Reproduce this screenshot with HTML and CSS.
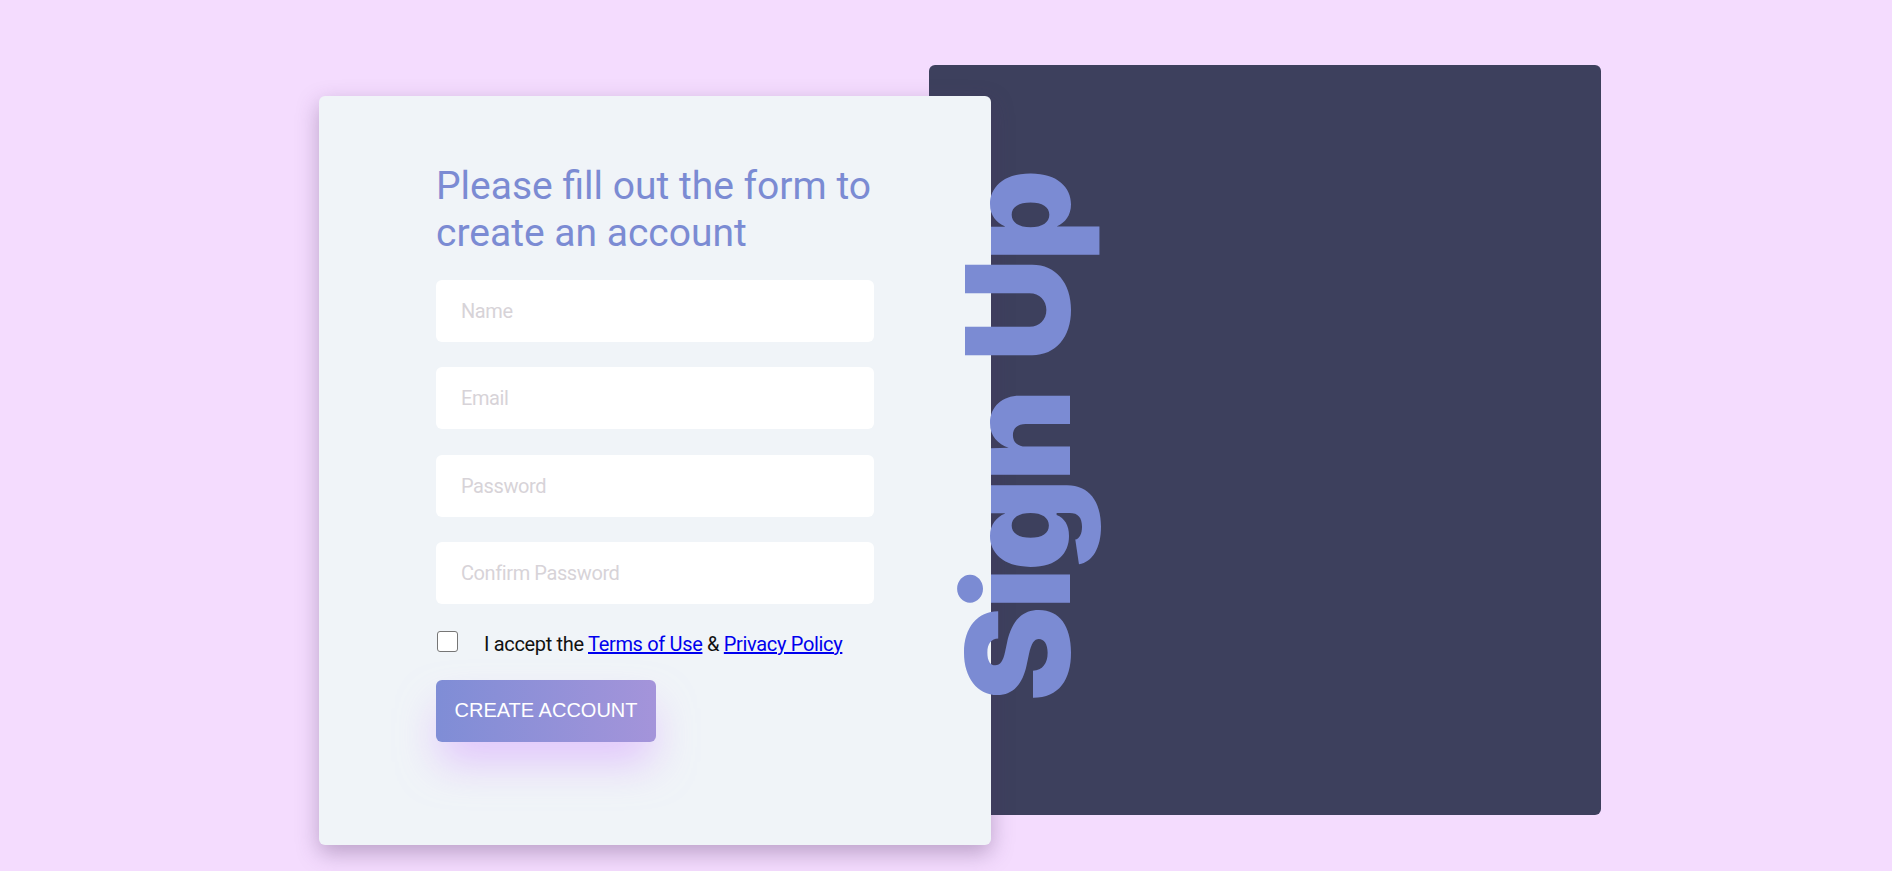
FILE: index.html
```html
<!DOCTYPE html>
<html lang="en">
<head>
<meta charset="utf-8">
<title>Sign Up</title>
<link rel="stylesheet" href="styles.css">
</head>
<body>
<main class="stage">
  <section class="card">
    <form class="form">
      <h2 class="title">Please fill out the form to create an account</h2>
      <input class="field" type="text" placeholder="Name">
      <input class="field" type="email" placeholder="Email">
      <input class="field" type="password" placeholder="Password">
      <input class="field" type="password" placeholder="Confirm Password">
      <label class="terms">
        <input class="check" type="checkbox">
        <span class="terms-text">I accept the <a href="#">Terms of Use</a> &amp; <a href="#">Privacy Policy</a></span>
      </label>
      <button class="btn" type="button">CREATE ACCOUNT</button>
    </form>
  </section>
  <aside class="panel">
    <h1 class="signup">Sign Up</h1>
  </aside>
</main>
</body>
</html>
```

FILE: styles.css
```css
html, body {
  margin: 0;
  padding: 0;
}

body {
  background: #f4dcfe;
  font-family: Roboto, "Liberation Sans", sans-serif;
  min-height: 100vh;
  overflow: hidden;
}

.stage {
  display: flex;
  align-items: flex-start;
  padding: 65px 0 0 319px;
}

.card {
  position: relative;
  z-index: 1;
  flex: none;
  box-sizing: border-box;
  width: 672px;
  height: 749px;
  margin-top: 31px;
  margin-right: -62px;
  padding: 67.3px 0 0 117px;
  background: #f0f4f8;
  border-radius: 6px;
  box-shadow: 0 8px 22px rgba(80, 50, 100, 0.35);
}

.form {
  width: 438px;
  display: flex;
  flex-direction: column;
}

.title {
  margin: 0 -40px 23.3px 0;
  font-family: Roboto, sans-serif;
  font-size: 39px;
  font-weight: 400;
  line-height: 46.7px;
  letter-spacing: 0;
  color: #7b8bd3;
}

.field {
  box-sizing: border-box;
  height: 62px;
  margin: 0 0 25.33px;
  padding: 0 25px;
  border: 0;
  border-radius: 6px;
  background: #fff;
  font-family: Roboto, sans-serif;
  font-size: 20px;
  letter-spacing: -0.4px;
  color: #333;
  outline: none;
}

.field::placeholder {
  color: #d7d3d8;
}

.terms {
  display: flex;
  align-items: flex-start;
  margin-top: 1.7px;
  font-size: 20px;
  letter-spacing: -0.33px;
  color: #111;
}

.check {
  appearance: none;
  -webkit-appearance: none;
  box-sizing: border-box;
  flex: none;
  width: 21px;
  height: 21px;
  margin: 0 26px 0 1px;
  border: 1px solid #767676;
  border-radius: 3px;
  background: #fff;
}

.terms-text {
  margin-top: 1px;
  line-height: normal;
}

.terms-text a {
  color: #0000ee;
  text-decoration: underline;
}

.btn {
  align-self: flex-start;
  box-sizing: border-box;
  width: 220px;
  height: 62px;
  margin-top: 23.5px;
  padding: 0;
  border: 0;
  border-radius: 6px;
  background: linear-gradient(90deg, #7f8dd6 0%, #a494da 100%);
  color: #fff;
  font-family: "Liberation Sans", Arial, sans-serif;
  font-size: 20px;
  box-shadow: 0 24px 40px -4px rgba(214, 158, 255, 0.55);
  cursor: pointer;
}

.panel {
  flex: none;
  display: flex;
  align-items: flex-start;
  width: 672px;
  height: 750px;
  background: #3d405d;
  border-radius: 6px;
}

.signup {
  position: relative;
  z-index: 2;
  margin: 108px 0 0 17px;
  writing-mode: vertical-rl;
  transform: rotate(180deg);
  font-family: Inter, Roboto, sans-serif;
  font-size: 144px;
  font-weight: 900;
  line-height: 1;
  letter-spacing: -4px;
  word-spacing: 6px;
  color: #7b8bd3;
  white-space: nowrap;
}
```
